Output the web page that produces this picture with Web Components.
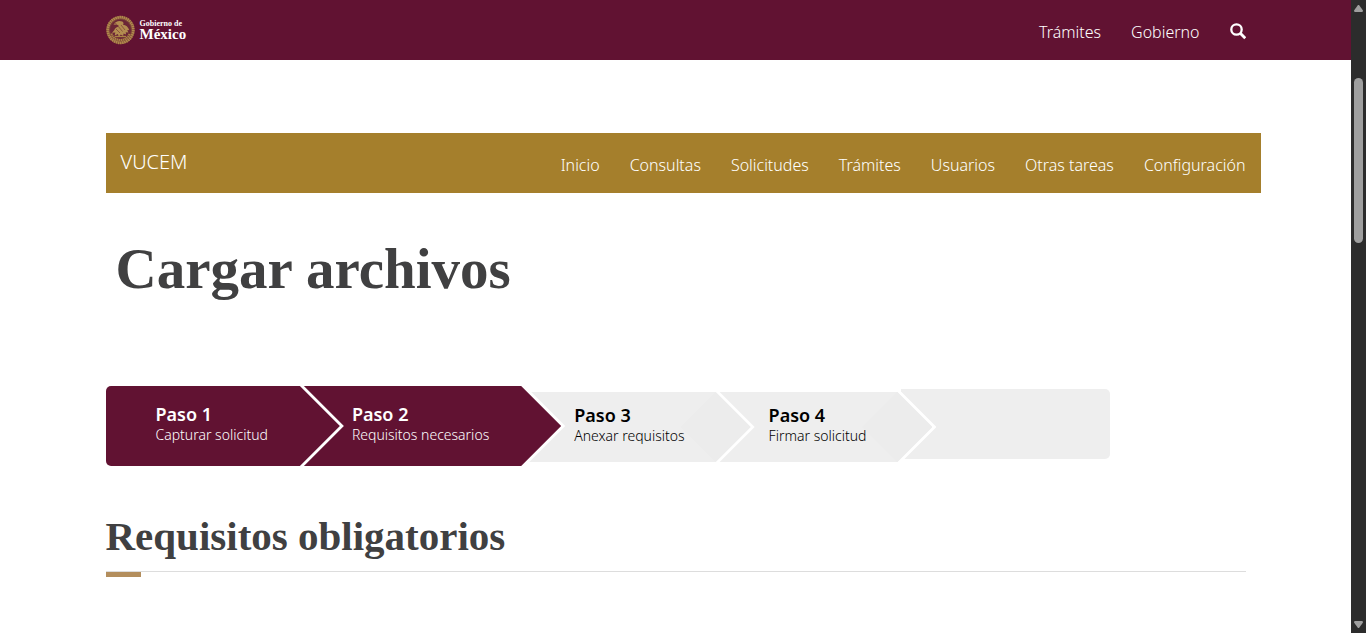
<!DOCTYPE html>
<html lang="es">
<head>
<meta charset="utf-8">
<meta name="viewport" content="width=device-width, initial-scale=1">
<title>VUCEM - Cargar archivos</title>
<style>
  body { margin: 0; background: #fff; color: #404041; font: 300 17px/24px "Noto Sans", sans-serif; }
</style>
</head>
<body>
<vucem-page>
  <gob-header>
    <nav-link href="#tramites">Trámites</nav-link>
    <nav-link href="#gobierno">Gobierno</nav-link>
  </gob-header>
  <page-container>
    <vucem-menu>
      <nav-link href="#inicio">Inicio</nav-link>
      <nav-link href="#consultas">Consultas</nav-link>
      <nav-link href="#solicitudes">Solicitudes</nav-link>
      <nav-link href="#tramites">Trámites</nav-link>
      <nav-link href="#usuarios">Usuarios</nav-link>
      <nav-link href="#tareas">Otras tareas</nav-link>
      <nav-link href="#configuracion">Configuración</nav-link>
    </vucem-menu>
    <page-title>Cargar archivos</page-title>
    <step-wizard>
      <wizard-step active first>Paso 1<span slot="detail">Capturar solicitud</span></wizard-step>
      <wizard-step active>Paso 2<span slot="detail">Requisitos necesarios</span></wizard-step>
      <wizard-step>Paso 3<span slot="detail">Anexar requisitos</span></wizard-step>
      <wizard-step>Paso 4<span slot="detail">Firmar solicitud</span></wizard-step>
    </step-wizard>
    <section-title>Requisitos obligatorios</section-title>
  </page-container>
  <scroll-rail slot="rail"></scroll-rail>
</vucem-page>

<script>
const define = (name, html) => {
  const template = document.createElement('template');
  template.innerHTML = html;
  customElements.define(name, class extends HTMLElement {
    constructor() {
      super();
      this.attachShadow({ mode: 'open' }).append(template.content.cloneNode(true));
    }
    connectedCallback() {
      const link = this.shadowRoot.querySelector('a[data-host]');
      if (link) link.setAttribute('href', this.getAttribute('href') || '#');
    }
  });
};

define('vucem-page', `
  <style>
    :host { display: grid; grid-template-columns: minmax(0, 1fr) 15px; min-height: 100vh; }
  </style>
  <main><slot></slot></main>
  <slot name="rail"></slot>`);

define('page-container', `
  <style>
    :host { display: block; box-sizing: border-box; max-width: 1170px; margin: 0 auto; padding: 73px 15px 32px; }
  </style>
  <slot></slot>`);

define('nav-link', `
  <style>
    :host { display: block; }
    a { color: inherit; text-decoration: none; white-space: nowrap; }
    a:hover { text-decoration: underline; }
  </style>
  <a data-host href="#"><slot></slot></a>`);

define('gob-header', `
  <style>
    :host { display: block; background: #611232; color: #fff; font-size: 16px; }
    .inner { display: flex; align-items: center; justify-content: space-between; box-sizing: border-box;
      max-width: 1170px; height: 60px; margin: 0 auto; padding: 0 15px; }
    .brand { display: flex; align-items: center; gap: 5px; color: #fff; text-decoration: none;
      font-family: "Liberation Serif", serif; font-weight: 700; }
    .words { display: grid; }
    .small { font-size: 8px; line-height: 8px; }
    .big { font-size: 15px; line-height: 12px; }
    nav { display: flex; align-items: center; gap: 30px; padding-top: 4px; }
    button { display: flex; padding: 0 0 2px; border: 0; background: none; color: #fff; cursor: pointer; }
    svg { display: block; }
  </style>
  <header class="inner">
    <a class="brand" href="#gob">
      <svg width="29" height="30" viewBox="0 0 29 30" fill="none" aria-hidden="true">
        <circle cx="14.5" cy="15" r="14" fill="#7b4238"/>
        <circle cx="14.5" cy="15" r="12.800" stroke="#b08a4c" stroke-width="2.800" stroke-dasharray="1.600 .5"/>
        <circle cx="14.5" cy="15" r="10.500" fill="#6b2636"/>
        <path d="M5.500 18.500c1 4 4.300 6.300 9 6.500 4.700-.2 8-2.500 9.200-6.500" stroke="#a98345" stroke-width="2.200" stroke-dasharray="1.500 .5"/>
        <path d="M7.500 9.500c1.700-3 5.500-4.500 8.800-3 1.400.7 1.600 2 .7 3.200 3 .3 5.200 2.100 6.200 5.300l-2 .3 1.300 2.200-2.800-.2.400 2.200-2.500-1-.5 2.500-2.300-1.600-2 2.400-.9-2.700-3.200 1.300.6-3-3.300.3 2.200-2.400c.7-1.600 2-3 3.800-3.500l.5-1.800z" fill="#b38d50"/>
        <path d="M11.500 10.500l5 6M15 10l4 5M10 14l4 4M8 8l3 1.500" stroke="#7b3a38" stroke-width=".7"/>
        <path d="M9 21.500h11" stroke="#a98345" stroke-width="1.300"/>
      </svg>
      <span class="words"><span class="small">Gobierno de</span><span class="big">México</span></span>
    </a>
    <nav aria-label="Gobierno">
      <slot></slot>
      <button type="button" aria-label="Buscar">
        <svg width="16" height="17" viewBox="0 0 16 17" fill="none" stroke="currentColor" aria-hidden="true">
          <circle cx="6.500" cy="6.500" r="5.200" stroke-width="2.300"/>
          <path d="M10.300 10.300l5 5" stroke-width="3"/>
        </svg>
      </button>
    </nav>
  </header>`);

define('vucem-menu', `
  <style>
    :host { display: flex; align-items: center; justify-content: space-between; box-sizing: border-box;
      height: 60px; margin-right: -15px; padding: 0 15px; background: #a57f2c; color: #fff; font-size: 16px; }
    .brand { padding-bottom: 2px; color: inherit; font-size: 20px; text-decoration: none; }
    nav { display: flex; gap: 30px; padding-top: 4px; }
  </style>
  <a class="brand" href="#vucem">VUCEM</a>
  <nav aria-label="Principal"><slot></slot></nav>`);

define('page-title', `
  <style>
    :host { display: block; padding: 44px 10px 0; }
    h1 { margin: 0; font: 700 57px/64px "Liberation Serif", serif; }
  </style>
  <h1><slot></slot></h1>`);

define('step-wizard', `
  <style>
    :host { display: flex; align-items: center; max-width: 1004px; margin-top: 85px; isolation: isolate; }
    .rest { flex: 1; height: 70px; margin: 0 0 4px -31px; border-radius: 0 5px 5px 0; background: #eee; }
    ::slotted(:nth-child(1)) { z-index: 4; }
    ::slotted(:nth-child(2)) { z-index: 3; }
    ::slotted(:nth-child(3)) { z-index: 2; }
    ::slotted(:nth-child(4)) { z-index: 1; }
    ::slotted([active] + :not([active])) { margin-left: -40px; }
    ::slotted(:nth-child(3)) { margin-left: -40px; }
  </style>
  <slot></slot>
  <div class="rest"></div>`);

define('wizard-step', `
  <style>
    :host { --tip: 35px; --fill: #eee; position: relative; display: flex; align-items: center; box-sizing: border-box;
      height: 70px; margin: 2px 0 0 -35px; padding: 0 66px 4px 53px; color: #000; white-space: nowrap; }
    :host([active]) { --tip: 40px; --fill: #611232; height: 80px; margin: 0 0 0 -40px; padding: 0 72px 4px 52px; color: #fff; }
    :host([first]) { margin-left: 0; padding-left: 50px; }
    .edge, .fill, .tip { position: absolute; top: 0; bottom: 0;
      clip-path: polygon(0 0, calc(100% - var(--tip)) 0, 100% 50%, calc(100% - var(--tip)) 100%, 0 100%); }
    .edge { left: 50%; right: -4px; background: #fff; }
    .fill { left: 0; right: 0; background: var(--fill); }
    .tip { right: 0; width: 70px; background: #ececec; clip-path: polygon(0 50%, 50% 0, 100% 50%, 50% 100%); }
    :host([active]) .tip { display: none; }
    :host([first]) .fill { border-radius: 5px 0 0 5px; }
    .text { position: relative; display: grid; }
    strong { font-size: 18px; line-height: 22px; font-weight: 600; }
    small { font-size: 14px; line-height: 20px; }
  </style>
  <div class="edge"></div><div class="fill"></div><div class="tip"></div>
  <div class="text"><strong><slot></slot></strong><small><slot name="detail"></slot></small></div>`);

define('section-title', `
  <style>
    :host { display: block; margin-top: 48px; }
    h2 { margin: 0; padding-bottom: 13px; border-bottom: 1px solid #ddd; font: 700 41px/44px "Liberation Serif", serif; }
    .bar { width: 35px; height: 5px; background: #b38e5d; }
  </style>
  <h2><slot></slot></h2>
  <div class="bar"></div>`);

define('scroll-rail', `
  <style>
    :host { position: sticky; top: 0; display: flex; flex-direction: column; align-items: center; box-sizing: border-box;
      height: 100vh; padding: 5px 0; background: #2c2c2c; }
    .track { flex: 1; width: 9px; padding-top: 66px; }
    .thumb { height: 165px; border-radius: 5px; background: #9f9f9f; }
    svg { display: block; }
  </style>
  <svg width="9" height="7" viewBox="0 0 9 7" aria-hidden="true"><path d="M4 0h1l4 5.500-.5 1.500h-8L0 5.500z" fill="#9f9f9f"/></svg>
  <div class="track"><div class="thumb"></div></div>
  <svg width="9" height="7" viewBox="0 0 9 7" aria-hidden="true"><path d="M4 7h1l4-5.500L8.500 0h-8L0 1.500z" fill="#9f9f9f"/></svg>`);
</script>
</body>
</html>
